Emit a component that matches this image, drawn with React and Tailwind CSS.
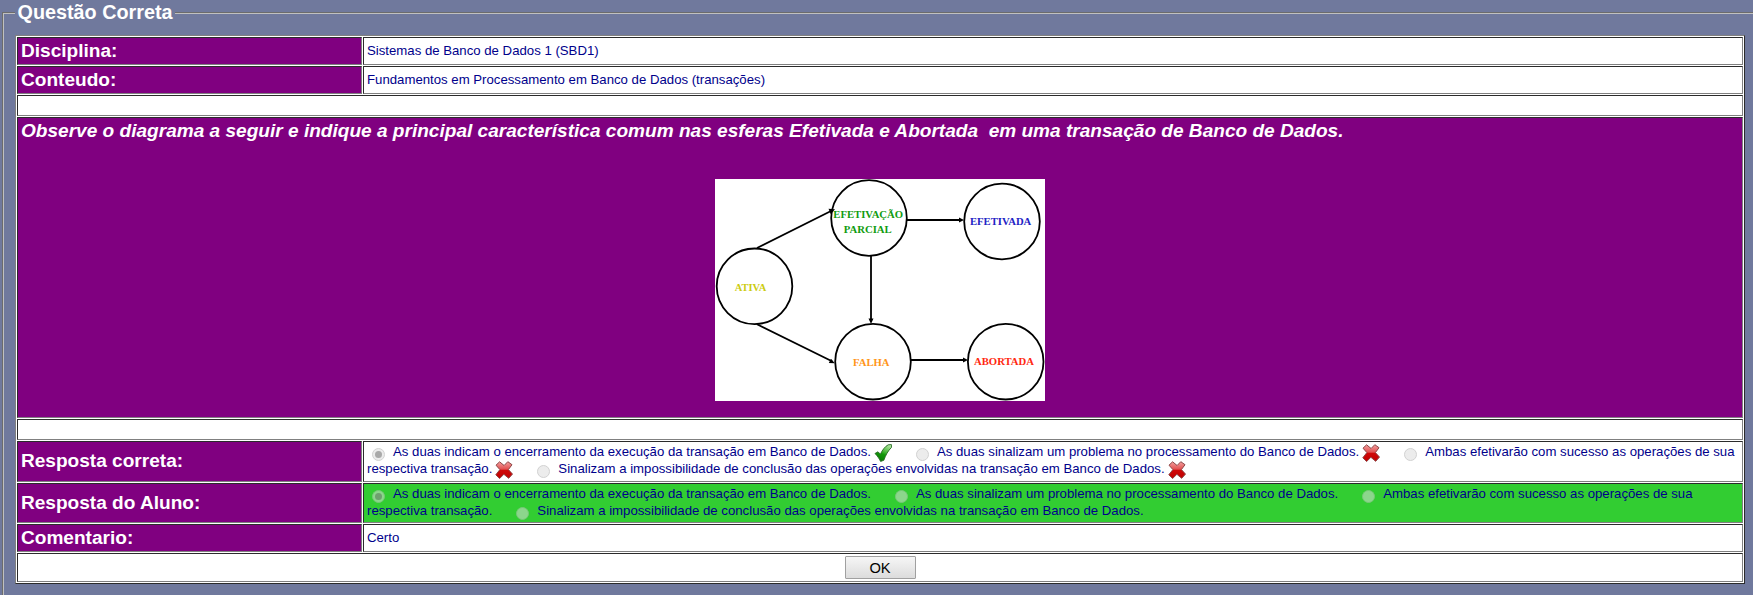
const cell = "border border-t-[#2b2b2b] border-l-[#2b2b2b] border-r-[#808080] border-b-[#808080]";

function Label({ children }) {
  return (
    <div className={`${cell} flex items-center bg-[#800080] pb-px pl-[3px] text-[19.07px] font-bold leading-[22px] text-white`}>
      {children}
    </div>
  );
}

function Value({ children }) {
  return <div className={`${cell} flex items-center bg-white pl-[3px]`}>{children}</div>;
}

function Full({ children, className = "bg-white" }) {
  return <div className={`${cell} col-span-2 ${className}`}>{children}</div>;
}

function Radio({ checked, green, className = "" }) {
  const tone = green
    ? "border-[#78c878] bg-[#8cd68c]"
    : "border-[#d2d2d2] bg-[#ececec]";
  const dot = green ? "bg-[#6f9f6f]" : "bg-[#a9a9a9]";
  return (
    <span className={`mt-[5px] flex size-[13px] shrink-0 items-center justify-center rounded-full border ${tone} ${className}`}>
      {checked && <span className={`size-[7px] rounded-full ${dot}`} />}
    </span>
  );
}

function Check() {
  return (
    <svg className="ml-[3px] mr-px mt-px size-[18px] shrink-0" viewBox="0 0 18 18">
      <defs>
        <linearGradient id="check" x1="0.8" y1="0" x2="0.4" y2="1">
          <stop offset="0" stopColor="#b5e8a5" />
          <stop offset="0.45" stopColor="#45b535" />
          <stop offset="0.6" stopColor="#129a08" />
          <stop offset="1" stopColor="#087a04" />
        </linearGradient>
      </defs>
      <path d="M1 9.500 4 7.800l2.400 2.400C8.300 6 11 2.500 14.200.8l3.200-.2.100 2.800C14 6.800 11.700 11 9.800 16.300l-3.200 1.100C5 14.200 3.200 11.700 1 9.500Z" fill="url(#check)" stroke="#286b25" strokeWidth=".9" strokeLinejoin="round" />
    </svg>
  );
}

function Cross() {
  return (
    <svg className="ml-[3px] mr-px mt-px size-[18px] shrink-0" viewBox="0 0 18 18">
      <defs>
        <linearGradient id="cross" x1="0" y1="0" x2="0" y2="1">
          <stop offset="0" stopColor="#f2a0a0" />
          <stop offset="0.45" stopColor="#e25050" />
          <stop offset="0.5" stopColor="#cf0808" />
          <stop offset="1" stopColor="#c00000" />
        </linearGradient>
      </defs>
      <path d="M1 4.200 4.600.8l4.500 3.700L12.800.7l4.200 3-3.600 4.900 4.100 4.500-3.800 4.200-4.800-4-4.300 4.200L.8 13.800l4.100-5.200Z" fill="url(#cross)" stroke="#8c4545" strokeWidth="1" strokeLinejoin="round" />
    </svg>
  );
}

const A = "As duas indicam o encerramento da execução da transação em Banco de Dados.";
const B = "As duas sinalizam um problema no processamento do Banco de Dados.";
const C = "Ambas efetivarão com sucesso as operações de sua";
const C2 = "respectiva transação.";
const D = "Sinalizam a impossibilidade de conclusão das operações envolvidas na transação em Banco de Dados.";

function Answers({ green }) {
  return (
    <div className={`${cell} flex flex-col whitespace-nowrap pl-[3px] pt-px leading-[17px] ${green ? "bg-[#32cd32]" : "bg-white"}`}>
      <div className="flex h-[17px] items-start">
        <Radio checked green={green} className="ml-[5px] mr-[8px]" />
        <span>{A}</span>
        {!green && <Check />}
        <Radio green={green} className={green ? "ml-[24px] mr-[8px]" : "ml-[23px] mr-[8px]"} />
        <span>{B}</span>
        {!green && <Cross />}
        <Radio green={green} className={green ? "ml-[24px] mr-[8px]" : "ml-[23px] mr-[8px]"} />
        <span>{C}</span>
      </div>
      <div className="flex h-[17px] items-start">
        <span>{C2}</span>
        {!green && <Cross />}
        <Radio green={green} className={green ? "ml-[24px] mr-[8px]" : "ml-[23px] mr-[8px]"} />
        <span>{D}</span>
        {!green && <Cross />}
      </div>
    </div>
  );
}

const circles = [
  [154, 39],
  [287, 42.5],
  [39.5, 107.3],
  [158, 182.7],
  [290.7, 182.7],
];

const labels = [
  ["EFETIVAÇÃO", 118.3, 38.7, 69.8, "#109c10"],
  ["PARCIAL", 128.7, 54, 48, "#109c10"],
  ["EFETIVADA", 255, 46.2, 61.3, "#2222c4"],
  ["ATIVA", 19.7, 111.5, 31.7, "#cccc10"],
  ["FALHA", 138, 187, 36.5, "#ff9518"],
  ["ABORTADA", 259, 186.2, 60, "#ff2810"],
];

function Diagram() {
  return (
    <svg width="330" height="222" viewBox="0 0 330 222" className="bg-white">
      <g fill="none" stroke="#000" strokeWidth="1.8">
        {circles.map(([x, y]) => (
          <circle key={`${x}-${y}`} cx={x} cy={y} r="37.8" />
        ))}
        <path d="M42 69 117 31.500M192 41h54M156 77v65M42 145.300l75 37M196 181h54" />
      </g>
      <path d="M120 30.300 113.500 29.800 115.800 35.300ZM249 41l-5-2.500v5ZM156 145l-2.500-5.500h5ZM119.800 184.200l-3.800-4.500-2.200 4.300ZM253 181l-5-2.500v5Z" fill="#000" />
      <g fontFamily="'Liberation Serif', serif" fontWeight="700" fontSize="11">
        {labels.map(([t, x, y, w, c]) => (
          <text key={t} x={x} y={y} textLength={w} lengthAdjust="spacingAndGlyphs" fill={c}>
            {t}
          </text>
        ))}
      </g>
    </svg>
  );
}

export default function App() {
  return (
    <div className="h-[595px] w-full overflow-hidden bg-[#70799d] pl-[2px] font-['Liberation_Sans',Arial,sans-serif] text-[13.2px] text-[#00008b]">
      <fieldset className="h-[640px] w-[1770px] border-2 border-[#c0c0c0] [border-style:groove] pl-[11px]">
        <legend className="h-[26px] pl-[2.5px] pr-[2px] text-[19.8px] font-bold leading-[25px] text-white">Questão Correta</legend>
        <div className="mt-[9px] grid w-[1730px] grid-cols-[345px_1380px] grid-rows-[28px_28px_21px_301px_21px_41px_40px_28px_29px] gap-px border border-t-[#808080] border-l-[#808080] border-r-[#2b2b2b] border-b-[#2b2b2b] bg-white p-px">
          <Label>Disciplina:</Label>
          <Value>Sistemas de Banco de Dados 1 (SBD1)</Value>
          <Label>Conteudo:</Label>
          <Value>Fundamentos em Processamento em Banco de Dados (transações)</Value>
          <Full />
          <Full className="flex flex-col bg-[#800080] px-[3px] pt-[2px]">
            <p className="whitespace-pre text-[19.07px] font-bold italic leading-[22px] text-white">
              {"Observe o diagrama a seguir e indique a principal característica comum nas esferas Efetivada e Abortada  em uma transação de Banco de Dados."}
            </p>
            <div className="mt-[37px] flex justify-center">
              <Diagram />
            </div>
          </Full>
          <Full />
          <Label>Resposta correta:</Label>
          <Answers />
          <Label>Resposta do Aluno:</Label>
          <Answers green />
          <Label>Comentario:</Label>
          <Value>Certo</Value>
          <Full className="flex items-start justify-center bg-white pt-[2px]">
            <button className="h-[23px] w-[71px] rounded-[1px] border border-[#a0a0a0] bg-linear-to-b from-[#f6f6f6] to-[#dcdcdc] pt-px text-[14.7px] leading-[21px] text-black">
              OK
            </button>
          </Full>
        </div>
      </fieldset>
    </div>
  );
}
